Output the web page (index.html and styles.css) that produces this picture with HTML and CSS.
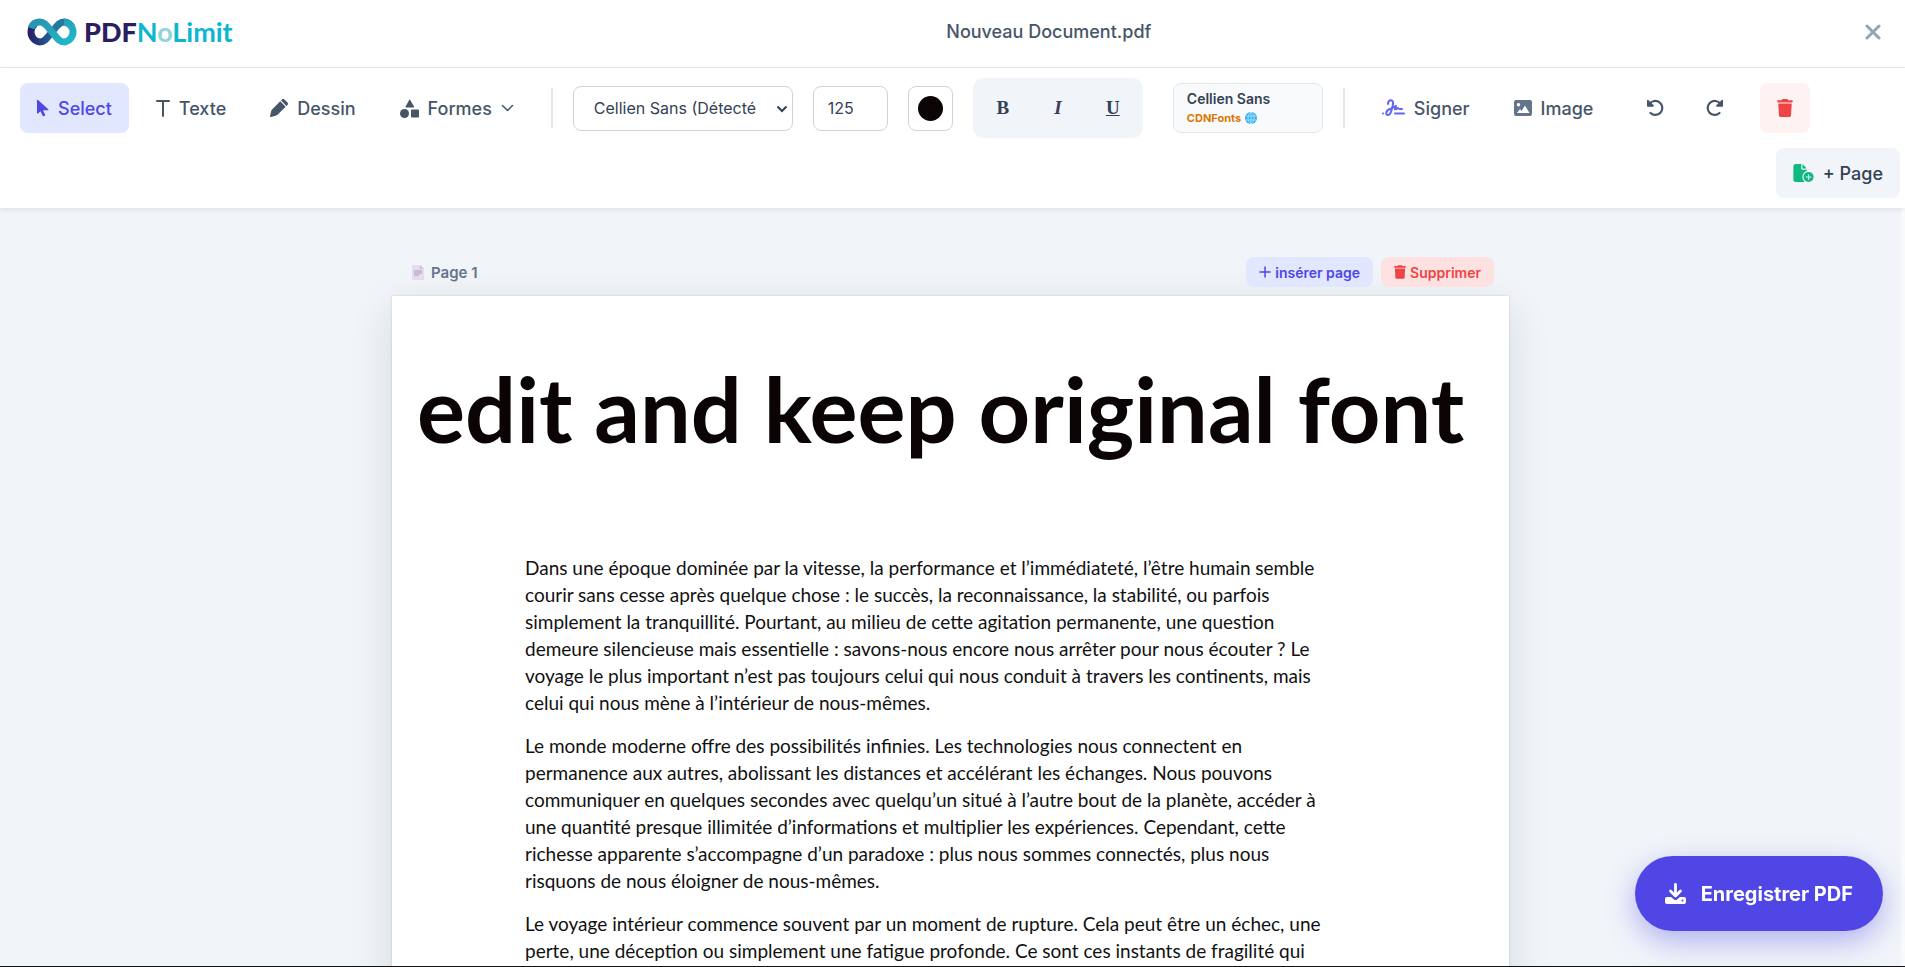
FILE: index.html
```html
<!DOCTYPE html>
<html lang="fr">
<head>
    <meta charset="UTF-8">
    <meta name="viewport" content="width=device-width, initial-scale=1.0">
    <title>PDFNoLimit - Nouveau Document.pdf</title>
    <link rel="stylesheet" href="styles.css">
</head>
<body>
    <header class="header">
        <a href="#" class="logo">
            <svg class="logo-mark" viewBox="0 0 50 28" aria-hidden="true">
                <defs>
                    <linearGradient id="gradDark" x1="0" y1="0" x2="1" y2="0">
                        <stop offset="0" stop-color="#25246a"/>
                        <stop offset="1" stop-color="#22649b"/>
                    </linearGradient>
                    <linearGradient id="gradTeal" x1="0" y1="0" x2="1" y2="1">
                        <stop offset="0" stop-color="#2a93b0"/>
                        <stop offset="1" stop-color="#1fb9c9"/>
                    </linearGradient>
                </defs>
                <path d="M25 14C20 20 18 24 13 24A10 10 0 0 1 4 14A10 10 0 0 1 8 6" fill="none" stroke="url(#gradDark)" stroke-width="7"/>
                <path d="M25 14C30 8 32 4 37 4A10 10 0 0 1 45 9" fill="none" stroke="#22789f" stroke-width="7"/>
                <path d="M4 10C6 5 9 4 13 4C18 4 20 8 25 14C30 20 32 24 37 24A10 10 0 0 0 46 14A10 10 0 0 0 37 4" fill="none" stroke="url(#gradTeal)" stroke-width="7"/>
            </svg>
            <span class="logo-text"><b>PDF</b>N<i>o</i>Limit</span>
        </a>
        <h1 class="doc-title">Nouveau Document.pdf</h1>
        <button class="close-btn" type="button" aria-label="Fermer">
            <svg width="16" height="16" viewBox="0 0 16 16"><path d="M2 2l12 12M14 2L2 14" stroke="currentColor" stroke-width="3" stroke-linecap="round"/></svg>
        </button>
    </header>

    <div class="toolbar">
        <button class="tool-btn active" type="button">
            <svg width="12" height="18" viewBox="0 0 12 18"><path d="M0 1.500v12.600c0 .5.5.7.9.4l2.600-2.300 2.200 4.600c.2.4.6.6 1 .4l1-.5c.4-.2.6-.6.4-1L6 11.300h4.800c.6 0 .9-.7.5-1.100L1 .9C.6.600 0 .9 0 1.500z" fill="currentColor"/></svg>
            Select
        </button>
        <button class="tool-btn" type="button">
            <svg width="14" height="18" viewBox="0 0 14 18"><path d="M1 2h12M7 2v15" fill="none" stroke="currentColor" stroke-width="2" stroke-linecap="round"/></svg>
            Texte
        </button>
        <button class="tool-btn" type="button">
            <svg width="18" height="18" viewBox="0 0 512 512"><path fill="currentColor" d="M410 14.600c-19-19-49-19-68 0L314 43l155 155 28-28c19-19 19-49 0-68zM291 66L59 298c-10 10-18 23-22 37L1 482c-2 8 0 17 6 23s15 8 23 6l147-43c14-4 26-11 37-22l232-225z"/></svg>
            Dessin
        </button>
        <button class="tool-btn" type="button">
            <svg width="19" height="19" viewBox="0 0 19 19" fill="currentColor"><path d="M9.900.6L14 7.500c.3.500 0 1-.6 1H6.200c-.6 0-.9-.5-.6-1L9.500.600z"/><circle cx="4.500" cy="14.500" r="4.500"/><rect x="11" y="10.500" width="8" height="8" rx="1"/></svg>
            Formes
            <svg class="chevron" width="13" height="8" viewBox="0 0 13 8"><path d="M1.500 1.500l5 5 5-5" fill="none" stroke="currentColor" stroke-width="1.500" stroke-linecap="round" stroke-linejoin="round"/></svg>
        </button>

        <div class="divider"></div>

        <div class="text-options">
            <div class="select-wrap">
                <select class="font-select" aria-label="Police">
                    <option>Cellien Sans (Détecté)</option>
                    <option>Inter</option>
                    <option>Roboto</option>
                </select>
                <svg width="12" height="8" viewBox="0 0 12 8"><path d="M1.500 1.500L6 6l4.500-4.500" fill="none" stroke="currentColor" stroke-width="2"/></svg>
            </div>
            <input class="size-input" type="text" value="125" aria-label="Taille">
            <button class="color-btn" type="button" aria-label="Couleur"><span></span></button>
            <div class="style-group">
                <button type="button" class="bold">B</button>
                <button type="button" class="italic">I</button>
                <button type="button" class="underline">U</button>
            </div>
            <div class="font-card">
                <div class="font-name">Cellien Sans</div>
                <div class="font-source">CDNFonts
                    <svg width="12" height="12" viewBox="0 0 12 12"><circle cx="6" cy="6" r="6" fill="#35b1f1"/><path d="M1 4h10M1 8h10M6 0v12M6 0C2 3 2 9 6 12M6 0c4 3 4 9 0 12" fill="none" stroke="#a5dcfa" stroke-width="1"/></svg>
                </div>
            </div>
        </div>

        <div class="divider"></div>

        <button class="tool-btn" type="button">
            <svg width="23" height="18" viewBox="0 0 23 18" fill="none" stroke="#6366f1" stroke-width="2" stroke-linecap="round" stroke-linejoin="round"><path d="M1 14.500h.1M22 14.500h-9M6 5c0-5 6-5 5 0-1 5-2 11-5 11-3 0-2-5 2-6 3-1 5-3 6-3-1 2-2 4 0 3l2-1c0 1 1 1 4 1"/></svg>
            Signer
        </button>
        <button class="tool-btn" type="button">
            <svg width="18" height="16" viewBox="0 0 18 16"><path fill="#64748b" fill-rule="evenodd" d="M2 0h14a2 2 0 0 1 2 2v12a2 2 0 0 1-2 2H2a2 2 0 0 1-2-2V2a2 2 0 0 1 2-2zM4.500 3a1.800 1.800 0 1 0 0 3.600 1.800 1.800 0 0 0 0-3.600zM3 13h12.500L11 5.500 7.500 11 6 9z"/></svg>
            Image
        </button>
        <button class="tool-btn icon-only undo-btn" type="button" aria-label="Annuler">
            <svg width="18" height="18" viewBox="0 0 18 18"><path d="M3.500 5A7 7 0 1 1 4.500 14" fill="none" stroke="currentColor" stroke-width="2.200" stroke-linecap="round"/><path d="M1 1.500v5.500c0 .5.3.8.8.8h5.200c.9 0 1.200-1 .6-1.500L2.300 1C1.800.500 1 .8 1 1.500z" fill="currentColor"/></svg>
        </button>
        <button class="tool-btn icon-only" type="button" aria-label="Rétablir">
            <svg width="18" height="18" viewBox="0 0 18 18"><path d="M14.500 5A7 7 0 1 0 13.500 14" fill="none" stroke="currentColor" stroke-width="2.200" stroke-linecap="round"/><path d="M17 1.500v5.500c0 .5-.3.8-.8.8H11c-.9 0-1.200-1-.6-1.500L15.700 1c.5-.5 1.300-.2 1.300.5z" fill="currentColor"/></svg>
        </button>
        <button class="tool-btn icon-only delete-btn" type="button" aria-label="Supprimer">
            <svg width="16" height="18" viewBox="0 0 448 512"><path fill="currentColor" d="M135 18l-7 14H32a32 32 0 0 0 0 64h384a32 32 0 0 0 0-64h-96l-7-14C307 7 296 0 284 0H164c-12 0-23 7-29 18zM416 128H32l21 339c2 25 23 45 48 45h246c25 0 46-20 48-45z"/></svg>
        </button>
        <button class="tool-btn add-page" type="button">
            <svg width="21" height="18" viewBox="0 0 576 512"><path fill="currentColor" d="M0 64C0 29 29 0 64 0h160v128c0 18 14 32 32 32h128v38c-74 21-128 90-128 170 0 59 29 111 73 144H64c-35 0-64-29-64-64zM384 128H256V0zm48 96a144 144 0 1 1 0 288 144 144 0 0 1 0-288zm16 80a16 16 0 0 0-32 0v48h-48a16 16 0 0 0 0 32h48v48a16 16 0 0 0 32 0v-48h48a16 16 0 0 0 0-32h-48z"/></svg>
            + Page
        </button>
    </div>

    <main class="workspace">
        <div class="page-wrap">
            <div class="page-bar">
                <div class="page-label">
                    <svg width="12" height="15" viewBox="0 0 12 15"><path d="M0 0h8l4 4v11H0z" fill="#e6dcf0"/><path d="M8 0l4 4H8z" fill="#cdbdd8"/><path d="M2 6h8M2 8h8M2 10h5" stroke="#a89bb5"/></svg>
                    Page 1
                </div>
                <div class="page-actions">
                    <button class="small-btn insert" type="button">
                        <svg width="12" height="12" viewBox="0 0 12 12"><path d="M6 1v10M1 6h10" stroke="currentColor" stroke-width="1.500" stroke-linecap="round"/></svg>
                        insérer page
                    </button>
                    <button class="small-btn remove" type="button">
                        <svg width="12" height="14" viewBox="0 0 448 512"><path fill="currentColor" d="M135 18l-7 14H32a32 32 0 0 0 0 64h384a32 32 0 0 0 0-64h-96l-7-14C307 7 296 0 284 0H164c-12 0-23 7-29 18zM416 128H32l21 339c2 25 23 45 48 45h246c25 0 46-20 48-45z"/></svg>
                        Supprimer
                    </button>
                </div>
            </div>
            <article class="page">
                <h2 class="page-title">edit and keep original font</h2>
                <div class="page-text">
                    <p>Dans une époque dominée par la vitesse, la performance et l’immédiateté, l’être humain semble<br>
                    courir sans cesse après quelque chose : le succès, la reconnaissance, la stabilité, ou parfois<br>
                    simplement la tranquillité. Pourtant, au milieu de cette agitation permanente, une question<br>
                    demeure silencieuse mais essentielle : savons-nous encore nous arrêter pour nous écouter ? Le<br>
                    voyage le plus important n’est pas toujours celui qui nous conduit à travers les continents, mais<br>
                    celui qui nous mène à l’intérieur de nous-mêmes.</p>
                    <p>Le monde moderne offre des possibilités infinies. Les technologies nous connectent en<br>
                    permanence aux autres, abolissant les distances et accélérant les échanges. Nous pouvons<br>
                    communiquer en quelques secondes avec quelqu’un situé à l’autre bout de la planète, accéder à<br>
                    une quantité presque illimitée d’informations et multiplier les expériences. Cependant, cette<br>
                    richesse apparente s’accompagne d’un paradoxe : plus nous sommes connectés, plus nous<br>
                    risquons de nous éloigner de nous-mêmes.</p>
                    <p>Le voyage intérieur commence souvent par un moment de rupture. Cela peut être un échec, une<br>
                    perte, une déception ou simplement une fatigue profonde. Ce sont ces instants de fragilité qui</p>
                </div>
            </article>
        </div>
    </main>

    <button class="save-btn" type="button">
        <svg width="21" height="21" viewBox="0 0 21 21"><path d="M10.500 1.500v10M5.500 8l5 5 5-5" fill="none" stroke="currentColor" stroke-width="2.800" stroke-linecap="round" stroke-linejoin="round"/><path fill="currentColor" fill-rule="evenodd" d="M2 14h4l3 2.500c1 .8 2 .8 3 0L15 14h4a2 2 0 0 1 2 2v3a2 2 0 0 1-2 2H2a2 2 0 0 1-2-2v-3a2 2 0 0 1 2-2zm15.500 2.500a1 1 0 1 0 0 2 1 1 0 0 0 0-2z"/></svg>
        Enregistrer PDF
    </button>
</body>
</html>
```

FILE: styles.css
```css
* {
    margin: 0;
    padding: 0;
    box-sizing: border-box;
}

body {
    height: 100vh;
    display: flex;
    flex-direction: column;
    overflow: hidden;
    font-family: Inter, "Liberation Sans", sans-serif;
    color: #475569;
    background: #f1f5f9;
    border-bottom: 1px solid #111;
}

button,
input,
select {
    font-family: inherit;
    color: inherit;
}

button {
    border: none;
    background: none;
    cursor: pointer;
}

svg {
    flex-shrink: 0;
}

/* Header */
.header {
    flex-shrink: 0;
    display: flex;
    align-items: center;
    justify-content: space-between;
    height: 68px;
    padding: 0 24px 4px 27px;
    background: white;
    border-bottom: 1px solid #e2e8f0;
}

.logo {
    display: flex;
    align-items: center;
    gap: 7px;
    text-decoration: none;
}

.logo-mark {
    width: 50px;
    height: 28px;
}

.logo-text {
    font-family: Lato, sans-serif;
    font-size: 27px;
    font-weight: bold;
    line-height: 28px;
    color: #0db7d3;
}

.logo-text b {
    color: #2a205f;
    font-weight: 900;
}

.logo-text i {
    font-style: normal;
    color: #8fd3df;
}

.doc-title {
    font-size: 18px;
    font-weight: 500;
}

.close-btn {
    display: flex;
    color: #94a3b8;
}

/* Toolbar */
.toolbar {
    flex-shrink: 0;
    z-index: 1;
    display: flex;
    flex-wrap: wrap;
    align-items: center;
    gap: 10px;
    padding: 10px 5px 10px 20px;
    background: white;
    box-shadow: 0 2px 4px rgba(15, 23, 42, 0.08);
}

.tool-btn {
    display: flex;
    align-items: center;
    gap: 9px;
    height: 50px;
    padding: 0 17px;
    border-radius: 8px;
    font-size: 18px;
    font-weight: 500;
}

.tool-btn.active {
    background: #e0e7ff;
    color: #4f46e5;
}

.icon-only {
    width: 50px;
    padding: 0;
    justify-content: center;
}

.undo-btn,
.delete-btn {
    margin-left: 10px;
}

.delete-btn {
    background: #fef2f2;
    color: #ef4444;
}

.add-page {
    margin-left: auto;
    background: #f1f5f9;
    color: #334155;
}

.add-page svg {
    color: #10b981;
}

.divider {
    width: 2px;
    height: 40px;
    margin: 0 10px;
    background: #e2e8f0;
}

.text-options {
    display: flex;
    align-items: center;
    gap: 20px;
}

.select-wrap {
    position: relative;
    width: 220px;
}

.select-wrap svg {
    position: absolute;
    top: 19px;
    right: 5px;
    color: #334155;
    pointer-events: none;
}

.font-select,
.size-input,
.color-btn {
    height: 45px;
    border: 1px solid #cbd5e1;
    border-radius: 8px;
    background: white;
    color: #334155;
    font-size: 16px;
}

.font-select {
    width: 100%;
    padding: 0 36px 0 20px;
    appearance: none;
}

.size-input {
    width: 75px;
    padding: 0 14px;
}

.color-btn {
    display: flex;
    align-items: center;
    justify-content: center;
    width: 45px;
}

.color-btn span {
    width: 25px;
    height: 25px;
    border-radius: 50%;
    background: #0a0405;
}

.style-group {
    display: flex;
    gap: 5px;
    padding: 5px;
    border-radius: 10px;
    background: #f1f5f9;
}

.style-group button {
    width: 50px;
    height: 50px;
    font-family: "Liberation Serif", serif;
    font-size: 19px;
    font-weight: bold;
    color: #334155;
}

.style-group .italic {
    font-style: italic;
}

.style-group .underline {
    text-decoration: underline;
}

.font-card {
    width: 150px;
    height: 50px;
    margin-left: 10px;
    padding: 5px 13px;
    border: 1px solid #e2e8f0;
    border-radius: 8px;
    background: #f8fafc;
}

.font-name {
    font-size: 14px;
    font-weight: 600;
    line-height: 20px;
    color: #334155;
}

.font-source {
    display: flex;
    align-items: center;
    gap: 4px;
    font-size: 11px;
    font-weight: 700;
    line-height: 18px;
    color: #d97706;
}

/* Document */
.workspace {
    flex: 1;
    overflow: hidden;
    padding-top: 49px;
    border-right: 4px solid #fafafa;
}

.page-wrap {
    max-width: 1117px;
    margin: 0 auto;
}

.page-bar {
    display: flex;
    align-items: center;
    justify-content: space-between;
    padding: 0 15px 9px 20px;
}

.page-label {
    display: flex;
    align-items: center;
    gap: 7px;
    font-size: 15px;
    font-weight: 600;
    color: #64748b;
}

.page-actions {
    display: flex;
    gap: 8px;
}

.small-btn {
    display: flex;
    align-items: center;
    gap: 4px;
    height: 30px;
    padding: 0 13px;
    border-radius: 8px;
    font-size: 14px;
    font-weight: 600;
}

.insert {
    background: #e0e7ff;
    color: #4f46e5;
}

.remove {
    background: #fee2e2;
    color: #ef4444;
}

.page {
    min-height: 1580px;
    padding: 52px 25px;
    background: white;
    box-shadow: 0 0 2px rgba(15, 23, 42, 0.15), 0 12px 40px rgba(15, 23, 42, 0.12);
}

.page-title {
    font-family: Lato, sans-serif;
    font-size: 90px;
    font-weight: 700;
    line-height: 120px;
    white-space: nowrap;
    color: #0a0405;
}

.page-text {
    margin-top: 86px;
    padding: 0 108px;
    font-family: Lato, sans-serif;
    font-size: 19px;
    line-height: 27px;
    white-space: nowrap;
    color: #111;
}

.page-text p {
    margin-bottom: 16px;
}

.save-btn {
    position: fixed;
    right: 22px;
    bottom: 36px;
    z-index: 2;
    display: flex;
    align-items: center;
    gap: 15px;
    height: 75px;
    padding: 0 30px;
    border-radius: 38px;
    background: #4f46e5;
    color: white;
    font-size: 20px;
    font-weight: 700;
    box-shadow: 0 10px 30px rgba(79, 70, 229, 0.4);
}
```
